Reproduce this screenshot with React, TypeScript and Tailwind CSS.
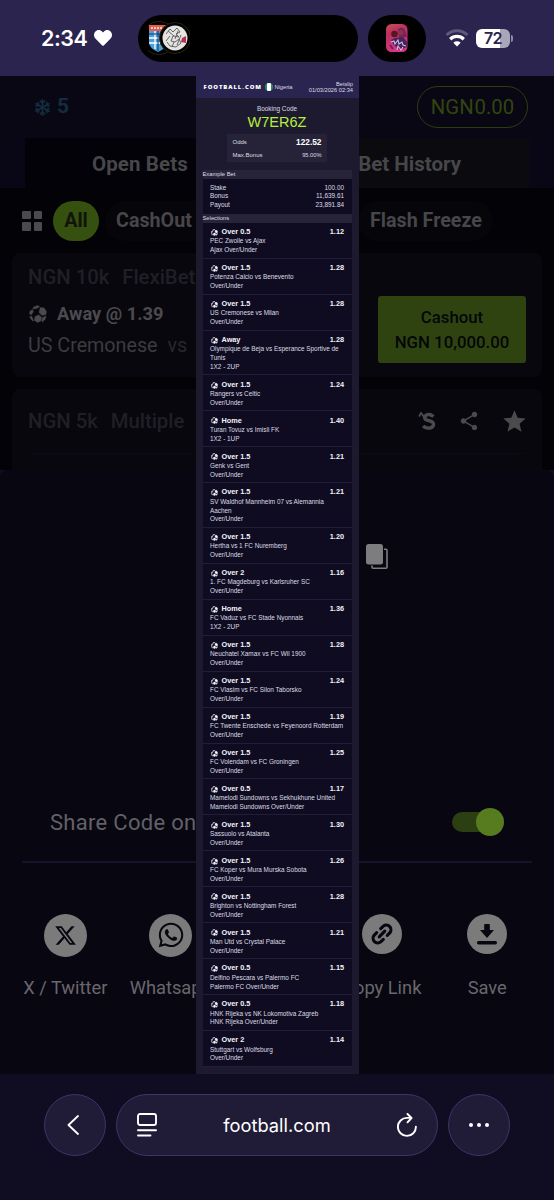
import type { ReactNode } from "react";
import { FaHeart, FaWhatsapp } from "react-icons/fa";
import { FaRegSnowflake, FaXTwitter } from "react-icons/fa6";
import { MdShare, MdStar } from "react-icons/md";

type Selection = { pick: string; odds: string; match: string; market: string };

const selections: Selection[] = [
  { pick: "Over 0.5", odds: "1.12", match: "PEC Zwolle vs Ajax", market: "Ajax Over/Under" },
  { pick: "Over 1.5", odds: "1.28", match: "Potenza Calcio vs Benevento", market: "Over/Under" },
  { pick: "Over 1.5", odds: "1.28", match: "US Cremonese vs Milan", market: "Over/Under" },
  { pick: "Away", odds: "1.28", match: "Olympique de Beja vs Esperance Sportive de\nTunis", market: "1X2 - 2UP" },
  { pick: "Over 1.5", odds: "1.24", match: "Rangers vs Celtic", market: "Over/Under" },
  { pick: "Home", odds: "1.40", match: "Turan Tovuz vs Imisli FK", market: "1X2 - 1UP" },
  { pick: "Over 1.5", odds: "1.21", match: "Genk vs Gent", market: "Over/Under" },
  { pick: "Over 1.5", odds: "1.21", match: "SV Waldhof Mannheim 07 vs Alemannia\nAachen", market: "Over/Under" },
  { pick: "Over 1.5", odds: "1.20", match: "Hertha vs 1 FC Nuremberg", market: "Over/Under" },
  { pick: "Over 2", odds: "1.16", match: "1. FC Magdeburg vs Karlsruher SC", market: "Over/Under" },
  { pick: "Home", odds: "1.36", match: "FC Vaduz vs FC Stade Nyonnais", market: "1X2 - 2UP" },
  { pick: "Over 1.5", odds: "1.28", match: "Neuchatel Xamax vs FC Wil 1900", market: "Over/Under" },
  { pick: "Over 1.5", odds: "1.24", match: "FC Vlasim vs FC Silon Taborsko", market: "Over/Under" },
  { pick: "Over 1.5", odds: "1.19", match: "FC Twente Enschede vs Feyenoord Rotterdam", market: "Over/Under" },
  { pick: "Over 1.5", odds: "1.25", match: "FC Volendam vs FC Groningen", market: "Over/Under" },
  { pick: "Over 0.5", odds: "1.17", match: "Mamelodi Sundowns vs Sekhukhune United", market: "Mamelodi Sundowns Over/Under" },
  { pick: "Over 1.5", odds: "1.30", match: "Sassuolo vs Atalanta", market: "Over/Under" },
  { pick: "Over 1.5", odds: "1.26", match: "FC Koper vs Mura Murska Sobota", market: "Over/Under" },
  { pick: "Over 1.5", odds: "1.28", match: "Brighton vs Nottingham Forest", market: "Over/Under" },
  { pick: "Over 1.5", odds: "1.21", match: "Man Utd vs Crystal Palace", market: "Over/Under" },
  { pick: "Over 0.5", odds: "1.15", match: "Delfino Pescara vs Palermo FC", market: "Palermo FC Over/Under" },
  { pick: "Over 0.5", odds: "1.18", match: "HNK Rijeka vs NK Lokomotiva Zagreb", market: "HNK Rijeka Over/Under" },
  { pick: "Over 2", odds: "1.14", match: "Stuttgart vs Wolfsburg", market: "Over/Under" },
];

function BallIcon({ className }: { className: string }) {
  return (
    <svg viewBox="0 0 18 18" className={className} fill="currentColor" stroke="currentColor" strokeWidth=".5" strokeLinejoin="round">
      <path d="M4.600 1.900 8.800.5l1.800 1.300-3 1.600-3.400.6z" />
      <path d="M11.300 2.600 15 2.900l2.400 3.600-.6 3.300-3.900.5-2.900-2.800z" />
      <path d="M5.900 11.700 9.400 9.900l3 2.200-.4 3.500-3.200 2-3.200-2z" />
      <path d="M13.600 12.600l3.500-1.400-.9 3-2.700 2.600-.9-.6z" />
      <path d="M3.400 4.200l.9 2.600-1.900 3L.5 8.800l.4-2.400z" />
      <path d="M.8 11.200l2 .3 1.900 4.400-1.200-.2-2-2.300z" />
    </svg>
  );
}

function StatusBar() {
  return (
    <header className="flex h-[76px] items-center bg-[#2a244e] font-['Inter',sans-serif] text-white">
      <div className="flex w-[138px] items-center gap-[6px] pl-[41px]">
        <span className="w-[47px] text-[21.5px] font-semibold tracking-[-0.5px]">2:34</span>
        <FaHeart className="size-[18px]" />
      </div>
      <div className="flex h-[47px] w-[220px] items-center rounded-full bg-black pl-[10px]">
        <svg viewBox="0 0 42 36" className="h-9 w-[42px]">
          <circle cx="11" cy="18" r="16.5" fill="none" stroke="#24260f" />
          <path d="M1 5h18v17q0 6-9 10Q1 28 1 22z" fill="#4aa0dc" />
          <path d="M1 5h18v6H1z" fill="#e35d4f" />
          <path d="M3 8h14" stroke="#f4c9c0" strokeWidth="2" strokeDasharray="2 1" />
          <path d="M1 18h18M7 11v18M1 23h14" stroke="#fff" strokeWidth="1.3" />
          <path d="M1 14h16M10 11v20" stroke="#17355c" />
          <circle cx="27" cy="18" r="15.5" fill="#000" stroke="#24260f" />
          <circle cx="27" cy="18" r="12.5" fill="#e5e4e2" />
          <path
            d="m18 14 4-5 3 3 4-4 3 4-4 2 3 3-6-1-2 5 4 1 4-3 2 4-5 4-6-1-3-4M22 16l-4 5M29 25l4-10M20 11l6 5M24 27l2-5M30 11l-3 8"
            fill="none"
            stroke="#666"
          />
          <path d="m34 18 4-2v7l-5-1z" fill="#b93152" />
        </svg>
      </div>
      <div className="ml-[10px] flex h-[47px] w-[58px] items-center justify-center rounded-full bg-black">
        <svg viewBox="0 0 22 28" className="h-7 w-[22px]">
          <defs>
            <linearGradient id="cover" x1="0" y1="0" x2=".3" y2="1">
              <stop offset="0" stopColor="#c9524c" />
              <stop offset=".35" stopColor="#b9305f" />
              <stop offset="1" stopColor="#d83583" />
            </linearGradient>
          </defs>
          <rect width="21.5" height="28" rx="5.5" fill="url(#cover)" />
          <path d="M12 5q6-4 8 4l1 4-8 1z" fill="#7a2062" />
          <circle cx="8.500" cy="10" r="3.300" fill="#55161f" />
          <circle cx="15" cy="8.500" r="2.500" fill="#8d3640" />
          <path d="M5 16l4-2 8-1 4 5v5l-7 3-6-5z" fill="#43255c" />
          <path d="m5 18 3-1 1 3 3-4 1 4 3-2 1 3 3 1M11 26l1-4 3 4 2-3" fill="none" stroke="#d6b8e4" strokeWidth="1.100" />
          <path d="m4 21 3 4" stroke="#6e2358" strokeWidth="2" />
        </svg>
      </div>
      <svg viewBox="0 0 24 18" className="ml-[19px] h-[18px] w-6" fill="none" strokeWidth="3">
        <path d="M1.500 6a15 15 0 0 1 21 0" stroke="#5f5a7c" />
        <path d="M5.200 10.200a9.800 9.800 0 0 1 13.600 0" stroke="#fff" strokeWidth="3.300" />
        <path d="M8.300 13.800a5.400 5.400 0 0 1 7.400 0L12 17.600z" fill="#fff" />
      </svg>
      <div className="ml-[7px] flex items-center gap-px">
        <div className="h-[19px] w-[34px] rounded-[6px] bg-[linear-gradient(90deg,#fff_72%,#a9a6b9_72%)] text-center text-[16px] leading-[19px] font-semibold tracking-[-0.7px] text-[#2a244e]">
          72
        </div>
        <div className="h-[7px] w-[2px] rounded-r-full bg-[#8e8aa3]" />
      </div>
    </header>
  );
}

function BetsPage() {
  return (
    <div className="h-[394px] bg-[#030206] text-[#474649]">
      <div className="flex h-[62px] items-center justify-between bg-[#090714] pr-[26px] pl-[34px]">
        <div className="flex items-center gap-[6px] text-[21px] font-bold text-[#132d3e]">
          <FaRegSnowflake className="size-[17px]" />5
        </div>
        <div className="h-[42px] w-[111px] rounded-full border border-[#2b3c10] text-center text-[20.3px] leading-[40px] whitespace-nowrap text-[#33450f]">
          NGN<span className="ml-[1px]">0.00</span>
        </div>
      </div>
      <div className="flex h-[50px] bg-[#090715] px-[25px] text-[20.5px] leading-[52px] font-bold">
        <div className="w-[252px] bg-[#030208] pl-[67px] tracking-[0.1px]">Open Bets</div>
        <div className="flex-1 bg-[#0b0a0e] pr-[68px] text-right">Bet History</div>
      </div>
      <div className="flex h-[65px] items-center pl-[22px] text-[19.7px] font-bold">
        <div className="grid grid-cols-2 gap-[3px]">
          <i className="size-[8.5px] rounded-[1px] bg-[#4b4a4d]" />
          <i className="size-[8.5px] rounded-[1px] bg-[#4b4a4d]" />
          <i className="size-[8.5px] rounded-[1px] bg-[#4b4a4d]" />
          <i className="size-[8.5px] rounded-[1px] bg-[#4b4a4d]" />
        </div>
        <div className="ml-[11px] h-10 w-[46px] rounded-full bg-[#36500f] text-center leading-10 text-[#10150c]">All</div>
        <div className="ml-[6px] h-10 w-[240px] rounded-full bg-[#060509] pl-[11px] leading-10">CashOut</div>
        <div className="ml-[13px] h-10 w-[135px] rounded-full bg-[#060509] pl-[12px] leading-10 whitespace-nowrap">Flash Freeze</div>
      </div>
      <div className="mx-3 flex h-[124px] rounded-lg bg-[#08070d] px-4">
        <div className="flex-1 whitespace-nowrap">
          <div className="flex h-[24px] gap-[13px] pt-[10px] text-[20.3px] leading-7 font-medium text-[#201f25]">
            <span>NGN 10k</span>
            <span>FlexiBet</span>
          </div>
          <div className="mt-[25px] flex h-6 items-center gap-[10px] pl-px text-[18.3px] font-bold text-[#4b4a4d]">
            <BallIcon className="size-[18px]" />
            Away @ 1.39
          </div>
          <div className="mt-[7px] flex gap-[10px] text-[19.7px] leading-[26px] text-[#3c3b40]">
            US Cremonese<span className="text-[#28272d]">vs</span>
          </div>
        </div>
        <button className="mt-[43px] h-[67px] w-[148px] rounded-[3px] bg-[#2f4311] text-[16.8px] leading-[25px] font-medium text-[#050607]">
          Cashout
          <br />
          NGN 10,000.00
        </button>
      </div>
      <div className="mx-3 mt-3 h-[81px] rounded-t-lg bg-[#08070d] px-4">
        <div className="flex h-[65px] items-center border-b border-[#0c0b13] text-[20.3px] font-medium text-[#201f25]">
          <span>NGN 5k</span>
          <span className="ml-[13px]">Multiple</span>
          <div className="-mr-[2px] ml-auto flex items-center text-[#4b4a4d]">
            <svg viewBox="0 0 18 20" className="mr-[22px] h-5 w-[18px]" fill="none" stroke="currentColor">
              <path d="M15.500 5.500Q12 2.600 8.500 4 6 5.500 7 7.800 8 9.200 12 10q4.500 1.300 3.300 4.600-1.600 3-5.800 2.400-2.700-.3-4.400-2" strokeWidth="3.400" />
              <path d="M1 5.500 3 2l2.500 3M3.500 2.500 8 9" strokeWidth="1.700" />
            </svg>
            <MdShare className="mr-[21px] size-[22px]" />
            <MdStar className="size-[27px]" />
          </div>
        </div>
      </div>
    </div>
  );
}

function ShareTarget({ label, small, children }: { label: string; small?: boolean; children: ReactNode }) {
  return (
    <div className="flex w-[105.5px] flex-col items-center">
      <div className="flex h-11 items-center">
        <div
          className={
            small
              ? "-mt-[3px] flex size-10 items-center justify-center rounded-full bg-[#7c7b7c] text-[#08060f]"
              : "flex size-[43px] items-center justify-center rounded-full bg-[#7c7b7c] text-[#08060f]"
          }
        >
          {children}
        </div>
      </div>
      <span className="mt-[19px] text-[18.3px] leading-[24px] whitespace-nowrap text-[#68676d]">{label}</span>
    </div>
  );
}

function ShareSheet() {
  return (
    <section className="h-[604px] rounded-t-lg bg-[#080610] pt-[74px]">
      <svg viewBox="0 0 22 26" className="ml-[365.5px] h-[26px] w-[22px]">
        <rect x="6" y="5.200" width="15" height="19" rx="1" fill="none" stroke="#7d7c7e" strokeWidth="1.600" />
        <rect width="18" height="21.500" rx="2.500" fill="#080610" />
        <rect width="17" height="20.500" rx="2.500" fill="#7d7c7e" />
      </svg>
      <div className="mt-[237px] flex h-[30px] items-center justify-between pr-[50px] pl-[50px]">
        <span className="text-[22px] tracking-[0.3px] text-[#626167]">Share Code on</span>
        <div className="flex h-5 w-[52px] items-center justify-end rounded-full bg-[#2c3f12]">
          <div className="size-[28px] shrink-0 rounded-full bg-[#567c1f]" />
        </div>
      </div>
      <div className="mx-[22px] mt-[24px] h-[2px] bg-[#151229]" />
      <div className="mt-[50px] flex pl-[12.5px]">
        <ShareTarget label="X / Twitter">
          <FaXTwitter className="size-[23px]" />
        </ShareTarget>
        <ShareTarget label="Whatsapp">
          <FaWhatsapp className="size-[28px]" />
        </ShareTarget>
        {/* middle column stays empty behind the slip */}
        <div className="w-[105.5px]" />
        <ShareTarget label="Copy Link" small>
          <svg viewBox="0 0 24 24" className="size-6" fill="none" stroke="currentColor" strokeWidth="3.100" strokeLinecap="round">
            <path d="M9.200 14.800 14.800 9.200" />
            <path d="m10.700 6.700 2.600-2.600a4.700 4.700 0 0 1 6.600 6.600l-2.600 2.600" />
            <path d="m13.300 17.300-2.600 2.600a4.700 4.700 0 0 1-6.600-6.600l2.600-2.600" />
          </svg>
        </ShareTarget>
        <ShareTarget label="Save" small>
          <svg viewBox="0 0 20 22" className="h-[22px] w-5" fill="currentColor">
            <path d="M8 1h4q.8 0 .8.800V7H17l-7 8-7-8h4.200V1.800Q7.200 1 8 1z" />
            <rect y="18" width="20" height="3.400" rx="1.600" />
          </svg>
        </ShareTarget>
      </div>
    </section>
  );
}

function BetSlip() {
  return (
    <article className="absolute top-0 left-[195.5px] h-[997.5px] w-[163px] bg-[#1d1a30] font-['Liberation_Sans',Arial,sans-serif] text-[6.4px] leading-[8.8px] text-[#dddce3]">
      <div className="flex h-[22px] items-center bg-[#2a2550] pr-[5.5px] pl-[8px] text-[5.7px] leading-[6.5px]">
        <span className="w-[57px] font-['Open_Sans',sans-serif] text-[5.9px] font-extrabold tracking-[0.95px] whitespace-nowrap text-white">
          FOOTBALL<span className="text-[#b6ef3c]">.</span>COM
        </span>
        <span className="ml-[4px] size-[8px] shrink-0 rounded-full bg-[linear-gradient(90deg,#2f8a63_30%,#fff_30%,#fff_70%,#2f8a63_70%)]" />
        <span className="ml-[2px]">Nigeria</span>
        <span className="ml-auto text-right whitespace-nowrap">
          Betslip
          <br />
          01/03/2026 02:34
        </span>
      </div>
      <div className="pt-[6.5px] text-center">Booking Code</div>
      <div className="text-center text-[14.5px] leading-[18px] text-[#b6ef3c]">W7ER6Z</div>
      <div className="mx-auto mt-[2.5px] h-[28.5px] w-[100px] bg-[#262338] px-[5.5px] pt-[2.5px] text-[6px]">
        <div className="flex h-[13px] items-center justify-between">
          Odds<b className="text-[8.3px] text-white">122.52</b>
        </div>
        <div className="flex h-[12px] items-center justify-between">
          Max.Bonus<span className="text-[5.7px]">95.00%</span>
        </div>
      </div>
      <div className="mx-[7px] mt-[7.5px] h-[9px] bg-[#272439] text-[5.8px] leading-[9.5px]">Example Bet</div>
      <div className="mx-[7px] h-[35px] bg-[#0f0c22] px-[7.5px] pt-[4.8px]">
        <div className="flex justify-between">Stake<span>100.00</span></div>
        <div className="flex justify-between">Bonus<span>11,639.61</span></div>
        <div className="flex justify-between">Payout<span>23,891.84</span></div>
      </div>
      <div className="mx-[7px] h-[9px] bg-[#272439] text-[5.8px] leading-[9.5px]">Selections</div>
      <div className="mx-[7px] bg-[#0f0c22]">
        {selections.map((s) => (
          <div key={s.match} className="border-b border-[#211e3b] px-[7.5px] pt-[4.8px] pb-[2.75px]">
            <div className="flex h-[9.8px] items-center text-[7.3px] font-bold text-[#f4f3f8]">
              <BallIcon className="mr-[4px] ml-[0.5px] size-[7px]" />
              {s.pick}
              <span className="ml-auto">{s.odds}</span>
            </div>
            <div className="whitespace-pre">{s.match}</div>
            <div>{s.market}</div>
          </div>
        ))}
      </div>
    </article>
  );
}

function BrowserBar() {
  return (
    <footer className="flex h-[126px] gap-[10px] bg-[#100d22] pt-[20px] pl-[44px] font-['Inter',sans-serif] text-white">
      <button className="flex size-[62px] items-center justify-center rounded-full border border-[#3c3565] bg-[#201c38]">
        <svg viewBox="0 0 12 20" className="mr-[4px] h-5 w-3" fill="none" stroke="currentColor" strokeWidth="1.800" strokeLinecap="round" strokeLinejoin="round">
          <path d="M11 1 1.500 10l9.500 9" />
        </svg>
      </button>
      <div className="flex h-[62px] w-[322px] items-center justify-between rounded-full border border-[#3c3565] bg-[#201c38] px-[20px]">
        <svg viewBox="0 0 20 24" className="h-6 w-5" fill="none" stroke="currentColor" strokeWidth="1.900" strokeLinecap="round">
          <rect x="1" y="1" width="18" height="11" rx="2" />
          <path d="M1 17.200h18M1 22.500h12.500" />
        </svg>
        <span className="pt-[2px] text-[18.3px]">football.com</span>
        <svg viewBox="0 0 20 24" className="h-6 w-5" fill="none" stroke="currentColor" strokeWidth="1.900" strokeLinecap="round" strokeLinejoin="round">
          <path d="M18.900 13.800A9 9 0 1 1 10 4.900h4.200" />
          <path d="m10.500 1 4 4-4 4.300" />
        </svg>
      </div>
      <button className="flex size-[62px] items-center justify-center gap-[4px] rounded-full border border-[#3c3565] bg-[#201c38]">
        <i className="size-[4px] rounded-full bg-white" />
        <i className="size-[4px] rounded-full bg-white" />
        <i className="size-[4px] rounded-full bg-white" />
      </button>
    </footer>
  );
}

export default function App() {
  return (
    <div className="h-[1200px] w-[554px] overflow-hidden bg-[#100d22]">
      <StatusBar />
      <main className="relative h-[998px] font-['Roboto',sans-serif]">
        <BetsPage />
        <ShareSheet />
        <BetSlip />
      </main>
      <BrowserBar />
    </div>
  );
}
